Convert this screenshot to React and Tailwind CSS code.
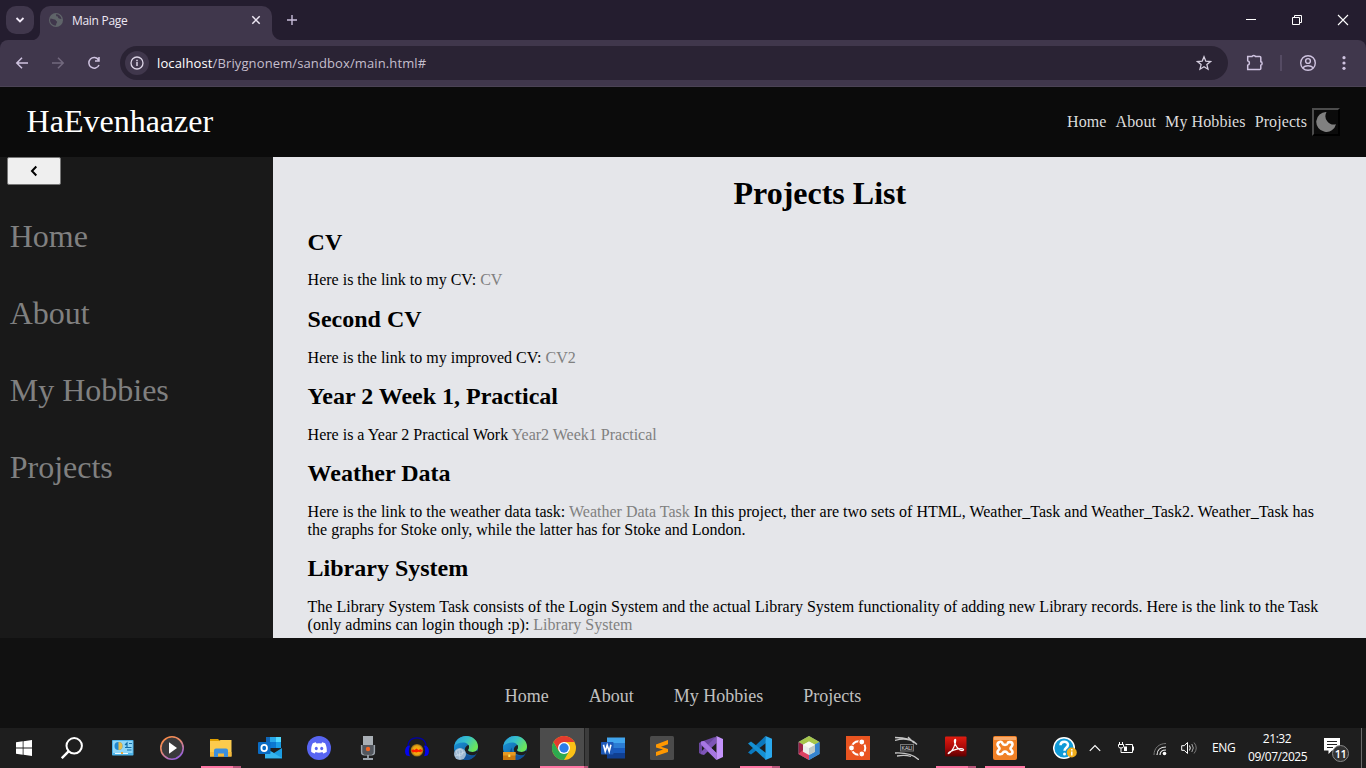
import React from "react";

const I = ({ children, s = 24, className = "" }) => (
  <svg width={s} height={s} viewBox="0 0 24 24" fill="none" className={"block shrink-0 " + className}>{children}</svg>
);

const Edge = ({ id, children }) => (
  <I>
    <defs>
      <linearGradient id={id + "a"} x1="0" y1="0" x2="1" y2="0.5"><stop stopColor="#2a9bdd" /><stop offset=".5" stopColor="#36c0cc" /><stop offset="1" stopColor="#6be65a" /></linearGradient>
      <linearGradient id={id + "b"} x1="0" y1="0" x2="1" y2="1"><stop stopColor="#1b9de2" /><stop offset="1" stopColor="#0f4c8c" /></linearGradient>
    </defs>
    <circle cx="12" cy="12" r="12" fill={"url(#" + id + "b)"} />
    <path d="M.3 10C1.500 3.500 7 0 12 0c7 0 12 5 12 10.500 0 3.500-2.500 5.500-5.500 5.500-3 0-4.500-1-4.500-2 0-.7 1-1.200 1-3C15 8.500 12.500 6.500 9 6.500 5 6.500 2 8 .3 10Z" fill={"url(#" + id + "a)"} />
    <path d="M14 14c0 1 1.500 2 4.500 2 2 0 3.700-.8 4.500-1.500 1 0 1 1.500-.3 3-1 1.200-3 2-5.200 1.700-4-.3-7.500-3-6.500-6.700.3-1.500 1.500-3 3.500-3.500.5.600.5 1.300.5 2 0 1.800-1 2.300-1 3Z" fill="#1e1e1e" />
    <path d="M9 11.500c-1 5.500 4 9 9 8.300 1.500-.2 2.700-.8 3.300-.6A12 12 0 0 1 12 24c-5.500-1.500-7-8-3-12.500Z" fill="#11519a" />
    {children}
  </I>
);

const apps = [
  { n: "panel", el: <I><rect x="1" y="4" width="21.500" height="15.500" rx=".8" fill="#4db4ea" /><rect x="2" y="5" width="19.500" height="12" fill="#8fd6f7" /><circle cx="7.500" cy="10" r="4" fill="#2087cf" /><path d="M7.500 10V6a4 4 0 0 1 0 8Z" fill="#e6bd4c" /><path d="M14 9l2-2v4m2-3.500h3M14 11.500h6.500M16 14h4.500" stroke="#126ea8" strokeWidth="1.200" /><path d="M4 17.500h13" stroke="#eefaff" /><rect x="10" y="16" width="2" height="2" fill="#e9a941" /></I> },
  { n: "player", el: <I><defs><linearGradient id="mp" x1="0" y1="0" x2=".6" y2="1"><stop stopColor="#ff8a3c" /><stop offset=".5" stopColor="#e58a70" /><stop offset="1" stopColor="#9a62d8" /></linearGradient></defs><circle cx="12" cy="12" r="11.200" fill="#3a3a3c" stroke="url(#mp)" strokeWidth="1.600" /><path d="M9 6.200 17 12l-8 5.800Z" fill="#fff" /></I> },
  { n: "files", bar: 1, el: <I><path d="M1 3h8l2 2H1Z" fill="#e0a000" /><path d="M1 5h9l1.500-1H22.500v16.500H1Z" fill="#fccb4d" /><path d="M1 16h21.500v4.500H1Z" fill="#f5b93b" /><path d="M5 21v-6.500a2 2 0 0 1 2-2h10a2 2 0 0 1 2 2V21h-4v-3.500H9V21Z" fill="#3c8fdd" /></I> },
  { n: "outlook", el: <I><path d="M8 1h15v11H8Z" fill="#1067b8" /><path d="M12 1h6v5h-6Z" fill="#28a8ea" /><path d="M18 1h5v5h-5Z" fill="#50d9ff" /><path d="M12 6h6v6h-6Z" fill="#0c78d0" /><path d="M18 6h5v6h-5Z" fill="#1a9ee6" /><path d="M7 22V12l9 5 8-5v10.500H7Z" fill="#1b9de2" /><path d="m7 12 17 10H7Z" fill="#35b5ee" /><rect y="6" width="12.500" height="12" rx="1" fill="#0a6cc4" /><ellipse cx="6.200" cy="12" rx="2.800" ry="3.200" stroke="#fff" strokeWidth="1.800" /></I> },
  { n: "discord", el: <I><circle cx="12" cy="12" r="12" fill="#5865f2" /><path d="M8.800 6.300c-1.300.2-2.300.6-3 1C4.500 9.500 4 12.500 4.200 15.800c1.300 1 2.400 1.400 3.500 1.700l.9-1.400c2.200.7 4.600.7 6.800 0l.9 1.400c1.100-.3 2.200-.7 3.500-1.700.2-3.300-.5-6.300-1.700-8.500-.8-.4-1.800-.8-3-1l-.6 1.100a12 12 0 0 0-5 0Z" fill="#fff" /><ellipse cx="9.300" cy="12.500" rx="1.500" ry="1.700" fill="#5865f2" /><ellipse cx="14.700" cy="12.500" rx="1.500" ry="1.700" fill="#5865f2" /></I> },
  { n: "recorder", el: <I><path d="M7 0h10v9H7Z" fill="#a9afb5" /><path d="M5 9h14v9H5Z" fill="#626870" /><path d="M7 9h10v9H7Z" fill="#53575e" /><path d="M5.500 9v7q0 3 3 3h7q3 0 3-3V9" stroke="#9ba3ab" strokeWidth="1.200" /><circle cx="12" cy="13" r="2.200" fill="#f26522" /><path d="M12 19v4M7 23h10" stroke="#9ba3ab" strokeWidth="1.800" /></I> },
  { n: "audacity", el: <I><defs><radialGradient id="au"><stop offset=".2" stopColor="#ffb400" /><stop offset=".7" stopColor="#e8a418" /><stop offset="1" stopColor="#8a6414" /></radialGradient></defs><circle cx="12" cy="14.300" r="6.300" fill="url(#au)" /><path d="m6 14.800 2-1.500 1.500.8 2-1.600 2 1.400 2-1 2.500 1.900-2.500 1.500-2-.6-2 .8-2-.6L8 16.500Z" fill="#ff1c00" /><path d="M3.200 13C2 6 6 1.800 12 1.800S22 6 20.800 13" stroke="#0000a8" strokeWidth="1.300" /><path d="M4 9.500c-4 1-5.200 6.500-2.500 10l3.500.7c-1.500-3-1.500-7 0-10.500ZM20 9.500c4 1 5.200 6.500 2.500 10l-3.500.7c1.500-3 1.500-7 0-10.500Z" fill="#0404ee" /></I> },
  { n: "edge1", el: <Edge id="e1"><circle cx="6" cy="18" r="6" fill="#9eb9d2" /><path d="m2 15 4-2 3 2-1 4-4 1ZM5 13l1 10M1 20l10-4" stroke="#dce8f2" strokeWidth=".5" /></Edge> },
  { n: "edge2", el: <Edge id="e2"><rect y="16" width="12.500" height="8" fill="#c9780d" /><rect y="16" width="12.500" height="3.500" fill="#e79a22" /><rect x="5.300" y="18.500" width="2" height="2.500" fill="#ffe45c" /></Edge> },
  { n: "chrome", bar: 1, active: 1, el: <I><circle cx="12" cy="12" r="12" fill="#fbc116" /><path d="M1.600 6A12 12 0 0 0 12 24l5.200-9L12 12 6.800 15Z" fill="#2da94f" /><path d="M1.600 6 6.800 15 12 6H22.400A12 12 0 0 0 1.600 6Z" fill="#e33b2e" /><circle cx="12" cy="12" r="6" fill="#fff" /><circle cx="12" cy="12" r="4.700" fill="#2b7de9" /></I> },
  { n: "word", el: <I><path d="M6 1.500h18V7H6Z" fill="#41a5ee" /><path d="M6 7h18v5H6Z" fill="#2b7cd3" /><path d="M6 12h18v5H6Z" fill="#185abd" /><path d="M6 17h18v5.500H6Z" fill="#103f91" /><rect y="6" width="12.500" height="12.500" rx=".8" fill="#1d59b8" /><path d="m2.500 8.800 1.700 6.600 2-6.200 2 6.200 1.700-6.600" stroke="#fff" strokeWidth="1.600" /></I> },
  { n: "sublime", el: <I><rect width="24" height="24" rx="1.500" fill="#4b4b4b" /><path d="M6 8.500 18 4v4.200l-7 2.600 7 2.200v3L6 20v-4l7-2.500L6 11.500Z" fill="#ff9800" /></I> },
  { n: "visualstudio", el: <I><path d="M0 7v10l2 1.200L17 3 15.500 1 2 5.700Z" fill="#6b479f" /><path d="M3 8.500v7L7 12Z" fill="#1e1e1e" /><path d="m2 5.700 3-.7 12.500 12V24L2 9Z" fill="#9061d0" /><path d="M2 18.200 5 19 17.500 7V0L2 16Z" fill="#7e55b8" /><path d="m2 5.700 3-.7 12.500 12v7L2 8Z" fill="#a777e3" /><path d="m17.500 0 6.500 3v18l-6.500 3V0Z" fill="#c493fb" /></I> },
  { n: "vscode", bar: 1, el: <I><path d="m17.500 0 .5 7L3 18.500 0 16.500Z" fill="#0b78bd" /><path d="M3 5.500 18 17v7L0 7.500Z" fill="#1590d3" /><path d="m17.500 0 6.500 2.700v18.600L17.500 24Z" fill="#2aa9ee" /></I> },
  { n: "netbeans", el: <I><path d="M12 0 1.500 6v12L12 24l10.500-6V6Z" fill="#7ba5c5" /><path d="M12 0 1.500 6 12 12l10.500-6Z" fill="#a7c64a" /><path d="M1.500 6v12l5 3V9Z" fill="#9c2344" /><path d="M1.500 18 12 24v-7l-5-4Z" fill="#dc4262" /><path d="M22.500 6v12L12 24v-8l5-7Z" fill="#3684cf" /><path d="m12 5.500 6 3.300v7L12 19l-6-3.200v-7Z" fill="#e9eeea" /><path d="m12 12 6-3.200v7L12 19Z" fill="#bfc9c6" /><path d="m12 5.500 6 3.300-6 3.200-6-3.200Z" fill="#f7faf0" /></I> },
  { n: "ubuntu", el: <I><rect width="24" height="24" fill="#e95420" /><circle cx="12.500" cy="12" r="6.800" stroke="#fff" strokeWidth="2" /><g fill="#fff" stroke="#e95420" strokeWidth="1.200"><circle cx="5.500" cy="12" r="3" /><circle cx="15.800" cy="6" r="3" /><circle cx="15.800" cy="18" r="3" /></g></I> },
  { n: "kali", el: <I><path d="M0 1.500c8 0 17 1.500 22 7M0 4.500c7-2 11-1.500 14-.5M13 1l6 6M0 17c10-.5 18 1 24 7M2 20c6-1 11-.5 14 .5" stroke="#c6c6c6" strokeWidth="1.300" /><rect x="5.500" y="8.500" width="13" height="6.500" fill="#242424" stroke="#777" /><text x="12" y="13.600" textAnchor="middle" fontSize="5" fill="#ddd" fontFamily="Liberation Sans">KALI</text></I> },
  { n: "acrobat", bar: 1, el: <I><defs><linearGradient id="ac" x1="0" y1="0" x2="0" y2="1"><stop stopColor="#e01c10" /><stop offset=".6" stopColor="#a50808" /><stop offset="1" stopColor="#5e0000" /></linearGradient></defs><rect x="1" y=".5" width="21.500" height="20" rx="1" fill="url(#ac)" /><path d="M11 3.500c-1.500 1.500 0 7 5 10.500 2 1 4 .5 3.500-.5-1-2-9-.5-14 2.500-2 1.500-1.500 2 0 1C8.500 15 12 8 11.700 4c0-.5-.4-.8-.7-.5Z" stroke="#fff" strokeWidth="1.200" /></I> },
  { n: "xampp", bar: 1, el: <I><rect width="24" height="24" rx="2" fill="#f08026" /><path d="M1 1h22v3H1Z" fill="#f7ab6c" /><path d="M9 6.500c0-1-4.500-1-4.500 2 0 2 2 2.700 2 4s-2 1.500-2 3.500c0 3 4.500 3 5.500.5.500-1.200 3.500-1.200 4 0 1 2.500 5.500 2.500 5.500-.5 0-2-2-2.200-2-3.500s2-2 2-4c0-3-4.500-3-5-1-.5 1.800-4.500 1.800-5 0Z" stroke="#fff" strokeWidth="2.600" /></I> },
];

const sections = [
  ["CV", <>Here is the link to my CV: <L>CV</L></>],
  ["Second CV", <>Here is the link to my improved CV: <L>CV2</L></>],
  ["Year 2 Week 1, Practical", <>Here is a Year 2 Practical Work <L>Year2 Week1 Practical</L></>],
  ["Weather Data", <>Here is the link to the weather data task: <L>Weather Data Task</L> In this project, ther are two sets of HTML, Weather_Task and Weather_Task2. Weather_Task has<br />the graphs for Stoke only, while the latter has for Stoke and London.</>],
  ["Library System", <>The Library System Task consists of the Login System and the actual Library System functionality of adding new Library records. Here is the link to the Task<br />(only admins can login though :p): <L>Library System</L></>],
];

function L({ children }) {
  return <a className="text-[#808080]">{children}</a>;
}

const links = ["Home", "About", "My Hobbies", "Projects"];

function Browser() {
  return (
    <header className="font-['Open_Sans',sans-serif]">
      <div className="flex h-10 bg-[#241d2f]">
        <div className="mt-1.5 ml-1.5 flex h-7 w-7 items-center justify-center rounded-[10px] bg-[#40374c]">
          <svg width="10" height="8" viewBox="0 0 10 8" fill="none"><path d="m1.500 2 3.500 3.500L8.500 2" stroke="#f1eaf8" strokeWidth="1.800" /></svg>
        </div>
        <svg width="6" height="40" className="block"><path d="M6 30a10 10 0 0 1-6 10h6Z" fill="#40374c" /></svg>
        <div className="mt-1.5 flex h-[34px] w-[232px] items-center rounded-t-[10px] bg-[#40374c] pr-2.5 pb-1.5 pl-2">
          <svg width="16" height="16" viewBox="0 0 16 16"><circle cx="8" cy="8" r="7" fill="#5f6469" /><path d="M2.500 6.500c2 0 2.500 1 4 1s1 1.500 2.500 2c.5 1-1 1.500-1 4-3 0-5.500-2-6-5ZM8 2.200c0 2 .5 2.300 2 2.300-.5 1.500 1 2.500 3.500 2.500C13 4 10.500 2 8 2.200Z" fill="#40374c" /></svg>
          <span className="mt-px ml-2 grow text-[12px] tracking-[-0.3px] text-[#eee8f4]">Main Page</span>
          <svg width="12" height="12" viewBox="0 0 12 12"><path d="m2.300 2.300 7.400 7.400m0-7.400-7.400 7.400" stroke="#eee8f4" strokeWidth="1.500" /></svg>
        </div>
        <svg width="8" height="40" className="block"><path d="M0 30a10 10 0 0 0 8 10H0Z" fill="#40374c" /></svg>
        <svg width="12" height="12" viewBox="0 0 12 12" className="mt-3.5 ml-1.5"><path d="M6 1v10M1 6h10" stroke="#c9bedb" strokeWidth="1.400" /></svg>
        <div className="ml-auto flex h-10 text-white">
          <svg width="46" height="40"><path d="M18 19.500h10" stroke="#fff" /></svg>
          <svg width="46" height="40" fill="none"><path d="M18.500 17.500h7v7h-7ZM20.500 17.500v-2h7v7h-2" stroke="#fff" /></svg>
          <svg width="46" height="40"><path d="m18 15 10 10m0-10L18 25" stroke="#fff" strokeWidth="1.100" /></svg>
        </div>
      </div>
      <div className="bg-[#241d2f]">
        <div className="flex h-[47px] items-center rounded-t-lg border-b border-[#4b4355] bg-[#40374c] text-[#cfc3e0]">
          <svg width="120" height="46" fill="none" stroke="currentColor" strokeWidth="1.500"><path d="M28 23H17m5-5.300L16.800 23l5.200 5.300" /><path d="M52 23h11m-5-5.300 5.200 5.300-5.200 5.300" stroke="#72697e" /><path d="M98.600 20A5.300 5.300 0 1 0 99 25M99 17v4h-4" /></svg>
          <div className="flex h-[34px] w-[1108px] items-center rounded-full bg-[#2a2334] pr-4 pl-[5px]">
            <div className="flex h-6 w-6 items-center justify-center rounded-full bg-[#40374c]">
              <svg width="14" height="14" viewBox="0 0 14 14" fill="none" stroke="#dcd5e6"><circle cx="7" cy="7" r="6" strokeWidth="1.300" /><path d="M7 6v4M7 3.800v1.400" strokeWidth="1.500" /></svg>
            </div>
            <span className="mt-px ml-2 grow text-[13px] tracking-[0.12px] text-[#c5bfcd]"><span className="text-white">localhost</span>/Briygnonem/sandbox/main.html#</span>
            <svg width="16" height="16" viewBox="0 0 16 16" fill="none"><path d="m8 1.800 1.800 4.400 4.700.4-3.600 3 1.100 4.600L8 11.700l-4 2.500 1.100-4.600-3.600-3 4.700-.4Z" stroke="#d6cfdf" strokeWidth="1.300" /></svg>
          </div>
          <svg width="138" height="46" fill="none" stroke="currentColor"><path d="M19.700 16.500h4.300a1.800 1.300 0 0 1 3.500 0h4.300q1 0 1 1v4.300a1.300 1.700 0 0 1 0 3.400v3.300q0 1-1 1H19.700v-4.200a2.400 2.400 0 0 0 0-4.600Z" strokeWidth="1.500" /><path d="M53 15v16" stroke="#5d536b" strokeWidth="1.500" /><circle cx="80" cy="23" r="7.300" strokeWidth="1.400" /><circle cx="80" cy="21" r="2.400" strokeWidth="1.400" /><path d="M74.800 27.800c2.500-2.800 7.900-2.800 10.400 0" strokeWidth="1.400" /><g fill="currentColor" stroke="none"><circle cx="116" cy="17.700" r="1.600" /><circle cx="116" cy="23" r="1.600" /><circle cx="116" cy="28.300" r="1.600" /></g></svg>
        </div>
      </div>
    </header>
  );
}

function Site() {
  return (
    <div className="font-['Liberation_Serif',serif]">
      <div className="flex h-[70px] items-center justify-between bg-[#0b0b0b] pr-[26px] pl-[26.600px]">
        <span className="pb-0.5 text-[32px] leading-[37px] text-white">HaEvenhaazer</span>
        <nav className="flex items-center text-[16px] leading-[18px] text-[#dcdcdc]">
          {links.map((t) => <a key={t} className="mr-[9px] tracking-[0.1px] last-of-type:mr-[5px]">{t}</a>)}
          <button className="flex h-7 w-7 items-center justify-center border-2 border-t-[#4c4c4c] border-r-black border-b-black border-l-[#4c4c4c]">
            <svg width="20" height="20" viewBox="0 0 20 20"><path d="M10.500 0A10 10 0 1 0 20 12.300 8.500 8.500 0 0 1 10.500 0Z" fill="#808080" /></svg>
          </button>
        </nav>
      </div>
      <div className="flex h-[481px]">
        <aside className="w-[273px] bg-[#191919] pl-[7px]">
          <button className="flex h-7 w-[54px] items-center justify-center rounded-[2px] border border-[#767676] bg-[#efefef]">
            <svg width="8" height="12" viewBox="0 0 8 12" fill="none"><path d="M6.300 1.500 2 6l4.300 4.500" stroke="#000" strokeWidth="2" /></svg>
          </button>
          <div className="mt-[33px] ml-[2.700px] flex flex-col gap-10 text-[32px] leading-[37px] text-[#808080]">
            {links.map((t) => <a key={t}>{t}</a>)}
          </div>
        </aside>
        <main className="h-[481px] w-[1093px] overflow-hidden bg-[#e5e6ea] pt-[18px] pr-[34px] pl-[34.600px] text-[16px] leading-[18px] text-black">
          <h1 className="mb-[17px] text-center text-[32px] leading-[37px] font-bold">Projects List</h1>
          <div className="flex flex-col gap-4">
            {sections.map(([h, p], i) => (
              <section key={h}>
                <h2 className="text-[24px] leading-[27px] font-bold">{h}</h2>
                <p className={"whitespace-nowrap " + (i === 0 ? "mt-[15px] mb-px" : "mt-4")}>{p}</p>
              </section>
            ))}
          </div>
        </main>
      </div>
      <footer className="flex h-[90px] justify-center gap-10 bg-[#111111] pt-12 text-[18px] leading-[21px] text-[#c0c0c0]">
        {links.map((t) => <a key={t}>{t}</a>)}
      </footer>
    </div>
  );
}

function Taskbar() {
  return (
    <div className="flex h-10 bg-[#1e1e1e] font-['Open_Sans',sans-serif] text-white">
      <div className="flex w-12 items-center justify-center"><svg width="16" height="16" viewBox="0 0 16 16" fill="#fff"><path d="M0 2.200 6.700 1.300v6.300H0ZM7.500 1.200 16 0v7.600H7.500ZM0 8.400h6.700v6.300L0 13.800ZM7.500 8.400H16V16l-8.500-1.200Z" /></svg></div>
      <div className="flex w-[51px] items-center pl-[13px]"><svg width="22" height="22" viewBox="0 0 22 22" fill="none" stroke="#fff" strokeWidth="2"><circle cx="13.200" cy="8.800" r="7.700" /><path d="M7.800 14.200.8 21.200" strokeWidth="2.400" /></svg></div>
      {apps.map((a) => (
        <div key={a.n} className={"relative flex w-[49px] items-center pl-3 " + (a.active ? "bg-[#4c4c4c]" : "")}>
          {a.el}
          {a.active && <span className="absolute top-0 right-0 h-10 w-[5px] border-l border-[#222] bg-[#3c3c3c]" />}
          {a.bar && <span className={"absolute bottom-0 flex h-0.5 bg-[#ff76a4] " + (a.active ? "left-0 w-12" : "left-1 w-10")}>{a.n !== "xampp" && <span className={"ml-auto h-0.5 bg-[#b75479] " + (a.active ? "w-1" : "w-2")} />}</span>}
        </div>
      ))}
      <div className="flex grow items-center pl-[22.500px]">
        <I className="h-6 w-6"><circle cx="11" cy="12" r="10.300" fill="#109ad7" stroke="#fff" strokeWidth="1.500" /><path d="M7.500 9.300C7.500 4.500 15 4.600 15 8.800c0 3-3.500 3-3.500 6" stroke="#fff" strokeWidth="2.500" /><circle cx="11.500" cy="18" r="1.500" fill="#fff" /><circle cx="18.800" cy="16.500" r="5" fill="#f0ae1d" /><path d="M18.800 15.500v4M18.800 13v1.400" stroke="#fff" strokeWidth="1.500" /></I>
        <svg width="12" height="8" viewBox="0 0 12 8" fill="none" className="ml-[12.500px]"><path d="m.8 6.800 5.200-5.200 5.200 5.200" stroke="#fff" strokeWidth="1.200" /></svg>
        <svg width="17" height="14" viewBox="0 0 17 14" fill="none" className="ml-[17px]"><path d="M7.500 3.500h7v8h-9.500M15.500 5.500v4M1.500 1v2M4.500 1v2M.5 3.500h5v2q0 1.500-2.500 1.500T.5 5.500ZM3 7v4.500h2.500" stroke="#fff" /><rect x="6" y="5.500" width="3" height="4.500" fill="#fff" /></svg>
        <svg width="14" height="14" viewBox="0 0 14 14" fill="none" className="mt-0.5 ml-[18px]"><path d="M1 13C1 6 6 1.500 13 1.500" stroke="#777" /><path d="M4 13c0-5 3.500-8 9-8M7 13c0-3 2-5 6-5" stroke="#eee" strokeWidth="1.200" /><circle cx="11.500" cy="11.500" r="1.800" fill="#fff" /></svg>
        <svg width="17" height="14" viewBox="0 0 17 14" fill="none" className="ml-[14px]"><path d="M.7 4.700h2.500L6.500 1.500v11L3.200 9.300H.7Z" stroke="#fff" /><path d="M8.500 4.500q1.500 2.500 0 5" stroke="#fff" /><path d="M10.800 3q3 4 0 8" stroke="#aaa" /><path d="M13 1.500q4.500 5.500 0 11" stroke="#777" /></svg>
        <span className="ml-[14px] w-[24px] text-[12px] tracking-[-0.3px] whitespace-nowrap">ENG</span>
        <div className="ml-3 w-[58px] text-center text-[12px] leading-[18px] tracking-[-0.45px] whitespace-nowrap"><div>21:32</div><div>09/07/2025</div></div>
        <div className="relative ml-[18px] h-6 w-6">
          <svg width="16" height="17" viewBox="0 0 16 17" className="mt-0.5"><path d="M0 0h16v12.500H8L4.500 16v-3.500H0Z" fill="#fff" /><path d="M3 3.500h10M3 6.500h10M3 9.500h6" stroke="#222" /></svg>
          <span className="absolute top-[9px] left-2 flex h-[17px] w-[17px] items-center justify-center rounded-full border border-[#8a8a8a] bg-[#333] text-[11px] leading-none font-semibold tracking-[-0.5px]">11</span>
        </div>
        <span className="mr-1 ml-auto h-10 w-px bg-[#6b6b6b]" />
      </div>
    </div>
  );
}

export default function App() {
  return (
    <div className="h-[768px] w-[1366px] overflow-hidden bg-black">
      <Browser />
      <Site />
      <Taskbar />
    </div>
  );
}
